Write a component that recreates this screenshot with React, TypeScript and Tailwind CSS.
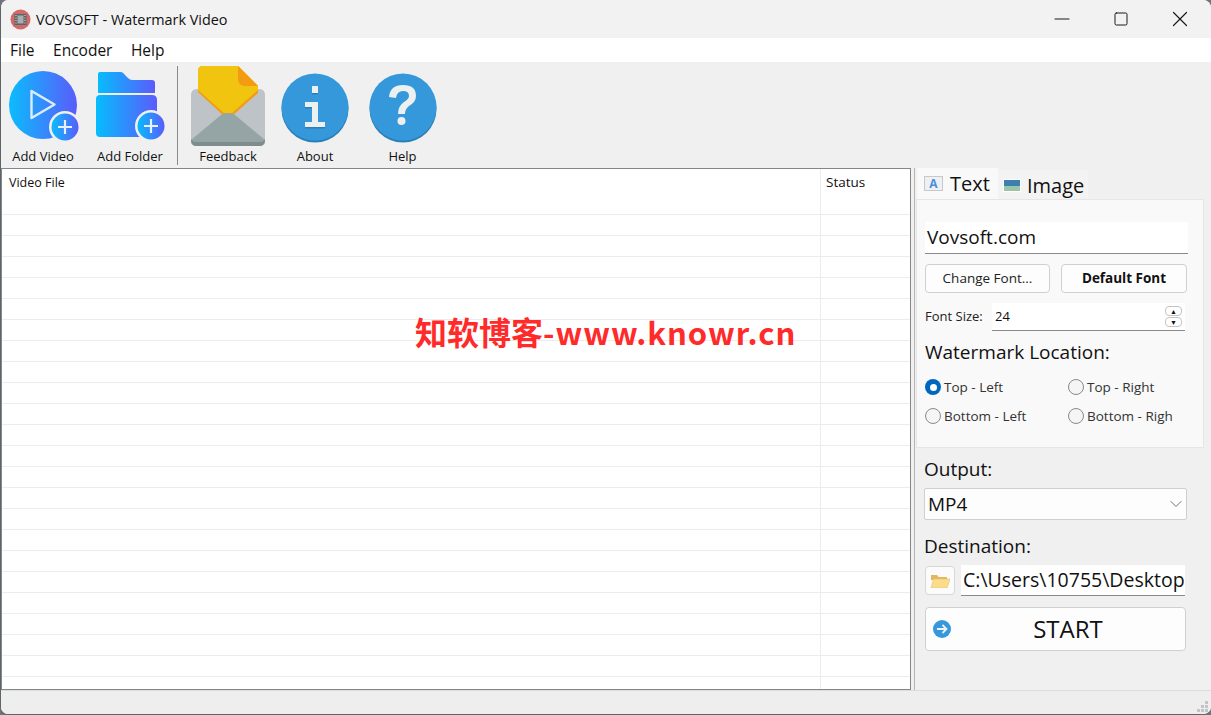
import React from 'react';
import { ChevronDown, Minus, Square, X } from 'lucide-react';

const FONT = "font-['Open_Sans','Noto_Sans',sans-serif]";

function AddBadge({ cx, cy, id }: { cx: number; cy: number; id: string }) {
  return (
    <g>
      <circle cx={cx} cy={cy} r="16" fill="#f0f0f0" />
      <circle cx={cx} cy={cy} r="13.5" fill={`url(#${id})`} />
      <path d={`M${cx - 7} ${cy}H${cx + 7}M${cx} ${cy - 7}V${cy + 7}`} stroke="#e8f0ff" strokeWidth="2.2" />
    </g>
  );
}

function AddVideoIcon() {
  return (
    <svg width="78" height="72" viewBox="0 0 78 72">
      <defs>
        <linearGradient id="gv" x1="0" x2="1" y1="0" y2="0">
          <stop offset="0" stopColor="#0bbcfd" />
          <stop offset="1" stopColor="#5a5cfb" />
        </linearGradient>
      </defs>
      <circle cx="39" cy="34" r="34" fill="url(#gv)" />
      <path d="M27.500 20L50.500 33.500 27.500 47z" fill="none" stroke="#dcecff" strokeWidth="2.400" strokeLinejoin="round" />
      <AddBadge cx={61} cy={56} id="gv" />
    </svg>
  );
}

function AddFolderIcon() {
  return (
    <svg width="76" height="72" viewBox="0 0 76 72">
      <defs>
        <linearGradient id="gf" x1="0" x2="1" y1="0" y2="0">
          <stop offset="0" stopColor="#06bcfe" />
          <stop offset="1" stopColor="#5b5cfb" />
        </linearGradient>
      </defs>
      <path d="M6 3q0-2 2-2h21q2 0 4 3l3 3q2 2 4 2h20q3 0 3 3v10H6z" fill="url(#gf)" />
      <path d="M4 28q0-4 4-4h52q5 0 5 5v33q0 4-4 4H8q-4 0-4-4z" fill="url(#gf)" />
      <AddBadge cx={59} cy={55} id="gf" />
    </svg>
  );
}

function FeedbackIcon() {
  return (
    <svg width="75" height="81" viewBox="0 0 75 81" className="-mb-[4px]">
      <path d="M0 29q0-6 6-6h62q6 0 6 6v45q0 6-6 6H6q-6 0-6-6z" fill="#bdc3c7" />
      <path d="M7 26V5q0-5 5-5h35l20 20v7L41 50H33z" fill="#f39c12" />
      <path d="M7 24V5q0-5 5-5h35l20 20v4L41 47H33z" fill="#f1c40f" />
      <path d="M47 0l20 20H54q-7 0-7-7z" fill="#f39c12" />
      <path d="M0 74L30 49q2-2 7-2t7 2l30 25q0 6-6 6H6q-6 0-6-6z" fill="#95a5a6" />
      <path d="M0 72v2q0 6 6 6h62q6 0 6-6v-2q0 4-6 4H6q-6 0-6-4z" fill="#7f8c8d" />
    </svg>
  );
}

function InfoIcon() {
  return (
    <svg width="68" height="70" viewBox="0 0 68 70">
      <circle cx="34" cy="36" r="33.500" fill="#2980b9" />
      <circle cx="34" cy="34" r="33.500" fill="#3498db" />
      <path d="M31 13h6v7h-6zM24 29h13v20h7v5H24v-5h7V34h-7z" fill="#2980b9" transform="translate(0 1.500)" />
      <path d="M31 13h6v7h-6zM24 29h13v20h7v5H24v-5h7V34h-7z" fill="#ecf0f1" />
    </svg>
  );
}

function HelpIcon() {
  return (
    <svg width="68" height="70" viewBox="0 0 68 70">
      <circle cx="34" cy="36" r="33.500" fill="#2980b9" />
      <circle cx="34" cy="34" r="33.500" fill="#3498db" />
      <path d="M20 24q1-12 14-12 13 0 13 11 0 6-7 10-4 3-4 8h-7q0-8 6-12 5-3 5-6 0-5-6-5-6 0-7 7z" fill="#ecf0f1" />
      <circle cx="32.500" cy="48" r="4" fill="#ecf0f1" />
    </svg>
  );
}

function ToolButton({ label, width, icon }: { label: string; width: string; icon: React.ReactNode }) {
  return (
    <div className={`flex h-full flex-col items-center justify-end ${width}`}>
      <div className="flex flex-1 items-end justify-center pb-[4px]">{icon}</div>
      <span className="pb-[3px] text-[13px] leading-[18px] text-[#111]">{label}</span>
    </div>
  );
}

function Radio({ label, checked }: { label: string; checked?: boolean }) {
  return (
    <div className="flex items-center gap-[3px] text-[13.5px] leading-[18px] text-[#333]">
      {checked ? (
        <span className="flex h-[16px] w-[16px] items-center justify-center rounded-full bg-[#0067c0]">
          <span className="h-[7px] w-[7px] rounded-full bg-white" />
        </span>
      ) : (
        <span className="h-[16px] w-[16px] rounded-full border border-[#8a8a8a] bg-[#f5f5f5]" />
      )}
      <span>{label}</span>
    </div>
  );
}

export default function App() {
  const rows = Array.from({ length: 23 });

  return (
    <div className={`h-[715px] w-[1211px] overflow-hidden bg-[#6f7478] ${FONT}`}>
      <div className="relative flex h-[715px] w-[1211px] flex-col overflow-hidden rounded-[8px] border-b border-l border-[#5f6468] bg-[#f0f0f0]">
        {/* title bar */}
        <div className="flex h-[38px] shrink-0 items-center bg-[#f3f2f3] pl-[9px]">
          <svg width="21" height="21" viewBox="0 0 21 21">
            <circle cx="10.500" cy="10.500" r="10" fill="#cf6a68" />
            <rect x="4.500" y="5" width="12" height="11" fill="#5f6367" />
            <rect x="7.500" y="6.500" width="6" height="8" fill="#a8adb0" />
            <path d="M5.500 6.500h1M5.500 9h1M5.500 11.500h1M5.500 14h1M14.500 6.500h1M14.500 9h1M14.500 11.500h1M14.500 14h1" stroke="#e4e4e4" strokeWidth="1.200" />
          </svg>
          <span className="ml-[5px] pt-[1px] text-[14.4px] text-[#111]">VOVSOFT - Watermark Video</span>
          <div className="ml-auto flex h-full items-center text-[#1a1a1a]">
            <Minus size={24} strokeWidth={1.100} className="mr-[39px]" />
            <Square size={16} strokeWidth={1.500} className="mr-[38px]" />
            <X size={26} strokeWidth={1.100} className="mr-[18px]" />
          </div>
        </div>

        {/* menu */}
        <div className="flex h-[24px] shrink-0 items-center gap-[18.500px] bg-white pl-[9px] pt-[1px] text-[15.5px] text-[#111]">
          <span>File</span>
          <span>Encoder</span>
          <span>Help</span>
        </div>

        {/* toolbar */}
        <div className="flex h-[106px] shrink-0 items-stretch pl-[1px]">
          <ToolButton label="Add Video" width="w-[82px]" icon={<AddVideoIcon />} />
          <ToolButton label="Add Folder" width="w-[92px]" icon={<AddFolderIcon />} />
          <div className="mx-[1px] mb-[3px] mt-[4px] w-px bg-[#8a8a8a]" />
          <ToolButton label="Feedback" width="w-[98px]" icon={<FeedbackIcon />} />
          <ToolButton label="About" width="w-[76px]" icon={<InfoIcon />} />
          <ToolButton label="Help" width="w-[99px]" icon={<HelpIcon />} />
        </div>

        {/* main */}
        <div className="flex min-h-0 flex-1">
          <div className="relative w-[910px] shrink-0 overflow-hidden border border-[#83878b] bg-white">
            <div className="flex h-[46px] border-b border-[#ececec] text-[#111]">
              <div className="w-[819px] border-r border-[#ececec] pl-[7px] pt-[5px] text-[12.5px]">Video File</div>
              <div className="pl-[5px] pt-[4px] text-[13.5px] leading-[18px]">Status</div>
            </div>
            {rows.map((_, i) => (
              <div key={i} className="flex h-[21px] border-b border-[#ececec]">
                <div className="w-[819px] border-r border-[#ececec]" />
              </div>
            ))}
            <div className="absolute left-[413px] top-[144px] whitespace-nowrap font-['Noto_Sans_CJK_SC',sans-serif] text-[32px] font-bold leading-[36px] text-[#ff2a2a]">
              知软博客<span className="text-[31px] tracking-[1px]">-www.knowr.cn</span>
            </div>
          </div>

          <div className="ml-[3px] w-px shrink-0 bg-[#b5b5b5]" />

          {/* right panel */}
          <div className="flex min-w-0 flex-1 flex-col">
            <div className="flex h-[31px] items-end pl-[2px]">
              <div className="flex h-[31px] w-[81px] items-center gap-[7px] bg-[#f9f9f9] pl-[7px] text-[20px] text-[#111]">
                <span className="flex h-[15px] w-[19px] items-center justify-center border border-[#c8c8c8] bg-[#eef1f4] text-[12px] font-bold leading-none text-[#4a90d9]">
                  A
                </span>
                Text
              </div>
              <div className="flex h-[29px] w-[90px] items-center gap-[6px] bg-[#f3f3f3] pl-[5px] pt-[2px] text-[20px] text-[#111]">
                <svg width="18" height="13" viewBox="0 0 18 13">
                  <rect width="18" height="13" fill="#fff" />
                  <rect x="1" y="1" width="16" height="6" fill="#3d7fae" />
                  <rect x="1" y="7" width="16" height="5" fill="#9cc4a8" />
                </svg>
                Image
              </div>
            </div>

            <div className="ml-[1px] flex h-[249px] w-[288px] flex-col border border-[#e6e6e6] bg-[#f9f9f9] pl-[8px]">
              <div className="mt-[22px] flex h-[32px] w-[263px] items-center border-b border-[#8a8a8a] bg-white pl-[2px] text-[19px] text-[#111]">
                Vovsoft.com
              </div>
              <div className="mt-[10px] flex gap-[11px] text-[13.5px]">
                <button className="h-[29px] w-[125px] rounded-[4px] border border-[#d0d0d0] bg-[#fdfdfd] text-[#222]">Change Font...</button>
                <button className="h-[29px] w-[126px] rounded-[4px] border border-[#d0d0d0] bg-[#fdfdfd] font-bold text-[#111]">Default Font</button>
              </div>
              <div className="mt-[10px] flex items-center text-[13px] text-[#222]">
                <span className="w-[67px]">Font Size:</span>
                <div className="flex h-[28px] w-[193px] items-center justify-between border-b border-[#8a8a8a] bg-white pl-[3px] pr-[3px] text-[13px] text-[#111]">
                  <span>24</span>
                  <span className="flex flex-col gap-[1px]">
                    <span className="flex h-[10px] w-[17px] items-center justify-center rounded-[4px] border border-[#c4c4c4] text-[7px] leading-none">▲</span>
                    <span className="flex h-[10px] w-[17px] items-center justify-center rounded-[4px] border border-[#c4c4c4] text-[7px] leading-none">▼</span>
                  </span>
                </div>
              </div>
              <div className="mt-[8px] text-[19px] leading-[26px] text-[#111]">Watermark Location:</div>
              <div className="mt-[13px] grid grid-cols-[143px_1fr] gap-y-[11px]">
                <Radio label="Top - Left" checked />
                <Radio label="Top - Right" />
                <Radio label="Bottom - Left" />
                <Radio label="Bottom - Righ" />
              </div>
            </div>

            <div className="flex flex-1 flex-col pl-[9px]">
              <div className="mt-[8px] text-[19px] leading-[26px] text-[#111]">Output:</div>
              <div className="mt-[6px] flex h-[32px] w-[263px] items-center justify-between rounded-[2px] border border-[#cfcfcf] bg-[#fdfdfd] pl-[3px] text-[19px] text-[#111]">
                MP4
                <ChevronDown size={20} strokeWidth={1} className="text-[#555]" />
              </div>
              <div className="mt-[13px] text-[19px] leading-[26px] text-[#111]">Destination:</div>
              <div className="ml-[1px] mt-[6px] flex items-center gap-[6px]">
                <div className="flex h-[29px] w-[30px] items-center justify-center rounded-[4px] border border-[#d8d8d8] bg-[#fbfbfb]">
                  <svg width="20" height="15" viewBox="0 0 20 15">
                    <path d="M1 2h6l1.500 2H17v3H1z" fill="#e0b860" />
                    <path d="M3.500 6H20l-3 9H1z" fill="#fbdc8a" stroke="#e6bf6c" strokeWidth=".600" />
                  </svg>
                </div>
                <div className="flex h-[31px] w-[224px] items-center overflow-hidden whitespace-nowrap border-b border-[#8a8a8a] bg-white pl-[2px] text-[19.5px] text-[#111]">
                  C:\Users\10755\Desktop
                </div>
              </div>
              <button className="ml-[1px] mt-[11px] flex h-[44px] w-[261px] items-center rounded-[4px] border border-[#d0d0d0] bg-[#fdfdfd] pl-[7px] text-[24px] text-[#111]">
                <svg width="18" height="18" viewBox="0 0 18 18" className="shrink-0">
                  <circle cx="9" cy="9" r="9" fill="#3498db" />
                  <path d="M4 9h9M9.500 5l4 4-4 4" fill="none" stroke="#ecf0f1" strokeWidth="1.800" />
                </svg>
                <span className="flex-1 text-center">START</span>
              </button>
            </div>
          </div>
        </div>

        {/* status bar */}
        <div className="relative h-[24px] shrink-0 border-t border-[#dcdcdc] bg-[#eeeeee]">
          <svg width="13" height="13" viewBox="0 0 13 13" className="absolute bottom-[1px] right-[2px]">
            <path d="M9 1h3v3H9zM5 5h3v3H5zM9 5h3v3H9zM1 9h3v3H1zM5 9h3v3H5zM9 9h3v3H9z" fill="#c4c4c4" />
          </svg>
        </div>
      </div>
    </div>
  );
}
